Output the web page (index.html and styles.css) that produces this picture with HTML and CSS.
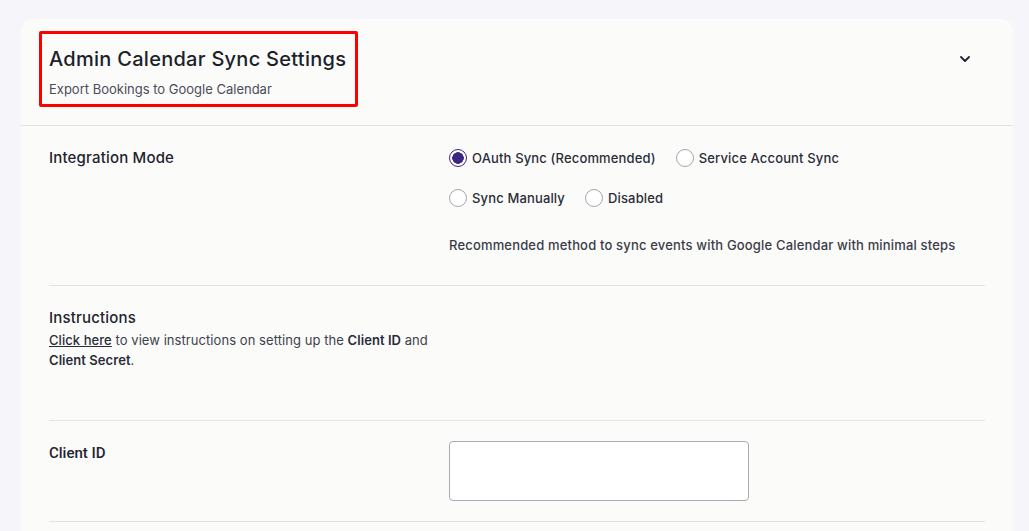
FILE: index.html
```html
<!DOCTYPE html>
<html lang="en">
<head>
    <meta charset="UTF-8">
    <meta name="viewport" content="width=device-width, initial-scale=1.0">
    <title>Admin Calendar Sync Settings</title>
    <link rel="stylesheet" href="styles.css">
</head>
<body>
    <div class="settings-card">
        <div class="card-header">
            <div class="header-text">
                <h1 class="card-title">Admin Calendar Sync Settings</h1>
                <p class="card-subtitle">Export Bookings to Google Calendar</p>
            </div>
            <button class="collapse-btn" type="button" aria-label="Collapse">
                <svg width="10" height="6" viewBox="0 0 10 6">
                    <polyline points="1,1 5,5 9,1" fill="none" stroke="#1f2330" stroke-width="1.8" stroke-linecap="round" stroke-linejoin="round"/>
                </svg>
            </button>
        </div>

        <div class="card-body">
            <div class="setting-row">
                <div class="setting-label">Integration Mode</div>
                <div class="setting-field">
                    <div class="radio-line">
                        <label class="radio-option"><input type="radio" name="mode" checked> OAuth Sync (Recommended)</label>
                        <label class="radio-option"><input type="radio" name="mode"> Service Account Sync</label>
                    </div>
                    <div class="radio-line">
                        <label class="radio-option"><input type="radio" name="mode"> Sync Manually</label>
                        <label class="radio-option"><input type="radio" name="mode"> Disabled</label>
                    </div>
                    <p class="field-help">Recommended method to sync events with Google Calendar with minimal steps</p>
                </div>
            </div>

            <div class="setting-row">
                <div class="setting-label">
                    Instructions
                    <p class="setting-desc"><a href="#">Click here</a> to view instructions on setting up the <strong>Client ID</strong> and <strong>Client Secret</strong>.</p>
                </div>
                <div class="setting-field"></div>
            </div>

            <div class="setting-row">
                <div class="setting-label narrow">Client ID</div>
                <div class="setting-field">
                    <input type="text" class="text-input" id="clientId">
                </div>
            </div>
        </div>
    </div>
</body>
</html>
```

FILE: styles.css
```css
* {
    margin: 0;
    padding: 0;
    box-sizing: border-box;
}

body {
    font-family: Inter, 'Noto Sans', sans-serif;
    background: #f5f5fa;
    color: #1f2330;
    padding: 19px 16px 0 21px;
    height: 531px;
    overflow: hidden;
}

.settings-card {
    background: #fbfbfa;
    border-radius: 12px;
    min-height: 600px;
}

.card-header {
    display: flex;
    justify-content: space-between;
    align-items: flex-start;
    padding: 12px 38px 18px 18px;
    border-bottom: 1px solid #e4e4e4;
}

.header-text {
    border: 3px solid #ff0000;
    border-radius: 2px;
    padding: 11px 9px 5px 7px;
}

.card-title {
    font-size: 20px;
    line-height: 28px;
    font-weight: 500;
    letter-spacing: 0.28px;
    color: #1c1f2a;
    margin-bottom: 6px;
}

.card-subtitle {
    font-size: 13px;
    line-height: 20px;
    color: #4a4d58;
}

.collapse-btn {
    background: none;
    border: none;
    width: 20px;
    height: 20px;
    margin-top: 18px;
    display: flex;
    align-items: center;
    justify-content: center;
    cursor: pointer;
}

.card-body {
    padding: 0 28px;
}

.setting-row {
    display: flex;
    padding: 20px 0;
    border-bottom: 1px solid #e4e4e4;
}

.setting-label {
    width: 400px;
    flex-shrink: 0;
    font-size: 15px;
    line-height: 24px;
    font-weight: 500;
    letter-spacing: 0.18px;
    color: #1f2330;
}

.setting-label.narrow {
    font-family: Roboto, sans-serif;
    letter-spacing: 0;
}

.setting-desc {
    font-size: 13px;
    line-height: 20px;
    font-weight: 400;
    letter-spacing: 0.06px;
    color: #3e414c;
    margin-bottom: 30px;
}

.setting-desc a {
    color: #2a2d38;
    font-weight: 500;
    text-decoration: underline;
}

.setting-desc strong {
    font-weight: 600;
    color: #2a2d38;
}

.setting-field {
    flex: 1;
}

.radio-line {
    display: flex;
    gap: 20px;
    height: 24px;
    align-items: center;
    margin-bottom: 16px;
}

.radio-option {
    display: flex;
    align-items: center;
    gap: 5px;
    font-size: 13px;
    font-weight: 500;
    letter-spacing: 0.15px;
    color: #2a2d38;
    cursor: pointer;
}

.radio-option input {
    appearance: none;
    width: 18px;
    height: 18px;
    border: 1px solid #a3a6ae;
    border-radius: 50%;
    background: #fff;
    margin: 0;
}

.radio-option input:checked {
    border: 1.5px solid #3b2585;
    background: radial-gradient(circle, #3b2585 0 5.5px, #fff 6px);
}

.field-help {
    font-size: 13px;
    line-height: 20px;
    font-weight: 500;
    letter-spacing: 0.17px;
    color: #3a3d48;
    margin-top: 25px;
    margin-bottom: 10px;
}

.text-input {
    display: block;
    width: 300px;
    height: 60px;
    border: 1px solid #a9abb2;
    border-radius: 4px;
    background: #fff;
    padding: 8px 10px;
    font-size: 14px;
}
```
